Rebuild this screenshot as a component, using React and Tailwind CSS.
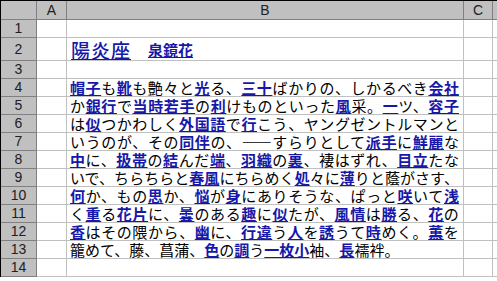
import React from 'react';

const lines = [
  '[帽子]も[靴]も艶々と[光]る、[三十]ばかりの、しかるべき[会社]',
  'か[銀行]で[当時若手]の[利]けものといった[風]采。[一]ツ、[容子]',
  'は[似]つかわしく[外国語]で[行]こう、ヤングゼントルマンと',
  'いうのが、その[同伴]の、――すらりとして[派手]に[鮮麗]な',
  '[中]に、[扱帯]の[結]んだ[端]、[羽織]の[裏]、褄はずれ、[目立]たな',
  'いで、ちらちらと[春風]にちらめく[処]々に[薄]りと蔭がさす、',
  '[何]か、もの[思]か、[悩]が[身]にありそうな、ぱっと[咲]いて[浅]',
  'く[重]る[花片]に、[曇]のある[趣]に[似]たが、[風情]は[勝]る、[花]の',
  '[香]はその隈から、[幽]に、[行違]う[人]を[誘]うて[時]めく。[薫]を',
  '籠めて、藤、菖蒲、[色]の[調]う[一枚小]袖、[長]襦袢。',
];

const Line = ({ text }) =>
  text.split(/(\[[^\]]+\])/).filter(Boolean).map((part, i) =>
    part.startsWith('[') ? (
      <span
        key={i}
        className="font-bold text-[#1818a8] underline decoration-1 underline-offset-[1px] [text-decoration-skip-ink:none]"
      >
        {part.slice(1, -1)}
      </span>
    ) : (
      <span key={i}>{part}</span>
    )
  );

const Row = ({ label, h, children }) => (
  <div className={`flex ${h}`}>
    <div className="w-[36px] shrink-0 bg-[#c0c0c0] border-r border-b border-[#808080] flex items-center justify-center text-[14px] text-[#202020] font-['Liberation_Sans',sans-serif]">
      {label}
    </div>
    <div className="w-[30px] shrink-0 border-r border-b border-[#c0c0c0]" />
    <div className="w-[397px] shrink-0 border-r border-b border-[#c0c0c0] pl-[3px] pr-[4px] flex items-end">
      {children}
    </div>
    <div className="w-[29px] shrink-0 border-r border-b border-[#c0c0c0]" />
    <div className="flex-1 border-b border-[#c0c0c0]" />
  </div>
);

export default function App() {
  return (
    <div className="w-[497px] h-[281px] bg-white overflow-hidden">
      <div className="flex flex-col border-t border-l border-black font-['Noto_Sans_CJK_JP',sans-serif] text-black">
        {/* column headers */}
        <div className="flex h-[19px] bg-[#c0c0c0] text-[14px] text-[#202020] font-['Liberation_Sans',sans-serif]">
          <div className="w-[36px] shrink-0 border-r border-b border-[#808080]" />
          <div className="w-[30px] shrink-0 border-r border-b border-[#808080] flex items-center justify-center">A</div>
          <div className="w-[397px] shrink-0 border-r border-b border-[#808080] flex items-center justify-center">B</div>
          <div className="w-[29px] shrink-0 border-r border-b border-[#808080] flex items-center justify-center">C</div>
          <div className="flex-1 border-b border-[#808080]" />
        </div>

        <Row label="1" h="h-[18px]" />
        <Row label="2" h="h-[23px]">
          <div className="flex items-end leading-[21px] pl-[1px] text-[#1818a8]">
            <span className="text-[19px] font-medium tracking-[1px] underline decoration-1 underline-offset-[1px] [text-decoration-skip-ink:none]">
              陽炎座
            </span>
            <span className="ml-[17px] text-[15px] font-bold underline decoration-1 underline-offset-[1px] [text-decoration-skip-ink:none]">
              泉鏡花
            </span>
          </div>
        </Row>
        <Row label="3" h="h-[18px]" />
        {lines.map((t, i) => (
          <Row key={i} label={String(i + 4)} h="h-[18px]">
            <div
              className={`w-full text-[15px] leading-[17px] whitespace-nowrap ${
                i < lines.length - 1 ? 'text-justify [text-align-last:justify]' : 'text-left'
              }`}
            >
              <Line text={t} />
            </div>
          </Row>
        ))}
        <Row label="14" h="h-[18px]" />
      </div>
    </div>
  );
}
